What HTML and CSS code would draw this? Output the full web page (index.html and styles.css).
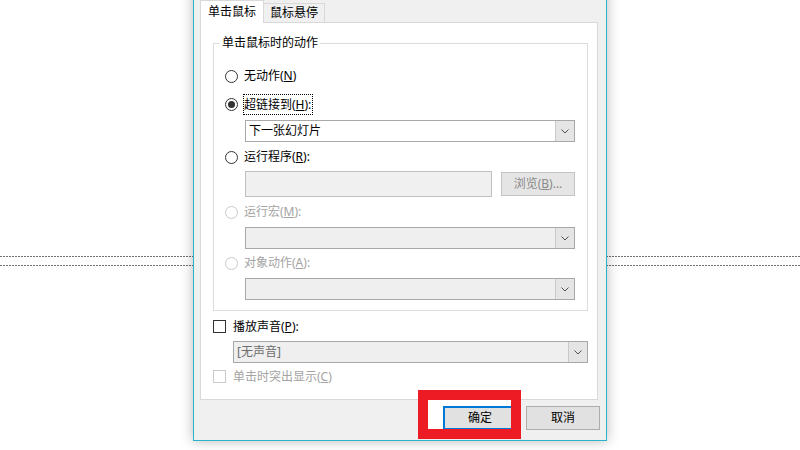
FILE: index.html
```html
<!DOCTYPE html>
<html lang="zh-CN">
<head>
<meta charset="utf-8">
<title>动作设置</title>
<link rel="stylesheet" href="styles.css">
</head>
<body>
<div class="slide">
  <div class="guide"></div>
  <div class="guide"></div>
</div>

<div class="dialog">
  <div class="tabs">
    <div class="tab active">单击鼠标</div>
    <div class="tab">鼠标悬停</div>
  </div>
  <div class="panel">
    <fieldset class="group">
      <legend>单击鼠标时的动作</legend>
      <div class="row r1"><span class="radio"></span><span class="label">无动作(<u>N</u>)</span></div>
      <div class="row r2"><span class="radio checked"></span><span class="label focus">超链接到(<u>H</u>):</span></div>
      <div class="select sel1"><span class="value">下一张幻灯片</span><span class="arrow"><svg width="8" height="5" viewBox="0 0 8 5"><polyline points="0.5,0.5 4,4 7.5,0.5" fill="none" stroke="#505050" stroke-width="1"/></svg></span></div>
      <div class="row r3"><span class="radio"></span><span class="label">运行程序(<u>R</u>):</span></div>
      <div class="inputrow">
        <div class="input"></div>
        <div class="browse">浏览(<u>B</u>)...</div>
      </div>
      <div class="row r4 disabled"><span class="radio"></span><span class="label">运行宏(<u>M</u>):</span></div>
      <div class="select sel2 off"><span class="value"></span><span class="arrow"><svg width="8" height="5" viewBox="0 0 8 5"><polyline points="0.5,0.5 4,4 7.5,0.5" fill="none" stroke="#505050" stroke-width="1"/></svg></span></div>
      <div class="row r5 disabled"><span class="radio"></span><span class="label">对象动作(<u>A</u>):</span></div>
      <div class="select sel3 off"><span class="value"></span><span class="arrow"><svg width="8" height="5" viewBox="0 0 8 5"><polyline points="0.5,0.5 4,4 7.5,0.5" fill="none" stroke="#505050" stroke-width="1"/></svg></span></div>
    </fieldset>
    <div class="row c1"><span class="check"></span><span class="label">播放声音(<u>P</u>):</span></div>
    <div class="select sound off"><span class="value grey">[无声音]</span><span class="arrow"><svg width="8" height="5" viewBox="0 0 8 5"><polyline points="0.5,0.5 4,4 7.5,0.5" fill="none" stroke="#505050" stroke-width="1"/></svg></span></div>
    <div class="row c2 disabled"><span class="check"></span><span class="label">单击时突出显示(<u>C</u>)</span></div>
  </div>
  <div class="buttons">
    <div class="btn default">确定</div>
    <div class="btn">取消</div>
  </div>
</div>

<div class="mark-fill"></div>
<div class="mark"></div>
</body>
</html>
```
FILE: styles.css
```css
* { box-sizing: border-box; }
body {
  margin: 0;
  width: 800px;
  height: 450px;
  overflow: hidden;
  position: relative;
  background: #fff;
  color: #000;
  font-family: "Noto Sans", "Noto Sans CJK SC", sans-serif;
  font-size: 12px;
}
u { text-decoration: underline; text-underline-offset: 1px; }

.slide { padding-top: 256px; }
.guide {
  height: 1px;
  background: repeating-linear-gradient(to right, #707070 0 2px, transparent 2px 3px);
}
.guide + .guide { margin-top: 8px; }

.dialog {
  position: absolute;
  left: 193px;
  top: -20px;
  width: 414px;
  height: 461px;
  background: #f0f0f0;
  border: 1px solid #2ab3c9;
  box-shadow: 0 0 12px rgba(0, 0, 0, 0.28);
  padding: 19px 6px 0 6px;
}

.tabs { display: flex; align-items: flex-end; height: 22px; }
.tab {
  height: 19px;
  padding: 0 6px;
  margin-left: -1px;
  border: 1px solid #d9d9d9;
  border-bottom: none;
  background: #f0f0f0;
  line-height: 18px;
  white-space: nowrap;
}
.tab.active {
  height: 23px;
  width: 64px;
  margin-left: 0;
  margin-bottom: -1px;
  text-align: center;
  padding: 0;
  line-height: 22px;
  background: #fff;
  position: relative;
  z-index: 1;
}

.panel {
  width: 398px;
  height: 378px;
  background: #fff;
  border: 1px solid #d9d9d9;
  padding: 0 9px 0 12px;
}

.group {
  margin: 12px 0 0 0;
  padding: 15px 12px 10px 12px;
  border: 1px solid #dcdcdc;
  min-width: 0;
}
.group legend {
  margin-left: -6px;
  padding: 0 2px;
  line-height: 16px;
  font-size: 12px;
}

.row { display: flex; align-items: center; height: 20px; white-space: nowrap; }
.r2 { height: 21px; margin-top: 8px; }
.r3 { margin-top: 5px; }
.r4 { margin-top: 5px; }
.r5 { margin-top: 4px; }

.radio {
  width: 13px;
  height: 13px;
  border: 1px solid #333;
  border-radius: 50%;
  margin-left: -1px;
  margin-right: 6px;
  display: flex;
  align-items: center;
  justify-content: center;
  flex: none;
}
.radio.checked::after {
  content: "";
  width: 7px;
  height: 7px;
  border-radius: 50%;
  background: #333;
}
.label { line-height: 18px; }
.focus {
  border: 1px dotted #000;
  margin-left: -1px;
  padding: 0 1px 0 0;
  height: 21px;
  line-height: 19px;
}
.disabled .radio, .disabled .check { border-color: #cacaca; }
.disabled .label { color: #a3a3a3; }

.select {
  display: flex;
  height: 22px;
  border: 1px solid #a8a8a8;
  background: #fff;
  margin-left: 19px;
}
.select .value { flex: 1; padding-left: 3px; line-height: 20px; }
.select .grey { color: #6d6d6d; }
.select .arrow {
  width: 19px;
  background: #e5e5e5;
  border-left: 1px solid #c9c9c9;
  display: flex;
  align-items: center;
  justify-content: center;
}
.select.off { background: #efefef; }
.sel1 { margin-top: 5px; }
.sel2 { margin-top: 5px; }
.sel3 { margin-top: 5px; }

.inputrow {
  display: flex;
  align-items: center;
  justify-content: space-between;
  height: 26px;
  margin: 4px 0 0 19px;
}
.input {
  width: 247px;
  height: 26px;
  background: #f0f0f0;
  border: 1px solid #c0c0c0;
}
.browse {
  width: 74px;
  height: 24px;
  background: #e5e5e5;
  border: 1px solid #c4c4c4;
  color: #8a8a8a;
  text-align: center;
  line-height: 22px;
}

.check {
  width: 13px;
  height: 13px;
  border: 1px solid #333;
  margin-right: 7px;
  flex: none;
}
.c1 { height: 21px; margin-top: 5px; }
.sound { margin: 4px 0 0 20px; }
.c2 { height: 21px; margin-top: 3px; }

.buttons {
  display: flex;
  justify-content: flex-end;
  gap: 9px;
  margin-top: 6px;
}
.btn {
  width: 74px;
  height: 24px;
  background: #e1e1e1;
  border: 1px solid #adadad;
  text-align: center;
  line-height: 22px;
  position: relative;
  z-index: 2;
}
.btn.default { border: 2px solid #0078d7; line-height: 20px; }

.mark-fill {
  position: absolute;
  left: 428px;
  top: 400px;
  width: 83px;
  height: 29px;
  background: #fff;
  z-index: 1;
}
.mark {
  position: absolute;
  left: 418px;
  top: 390px;
  width: 103px;
  height: 49px;
  border: 10px solid #ed1c24;
  z-index: 3;
}
```
